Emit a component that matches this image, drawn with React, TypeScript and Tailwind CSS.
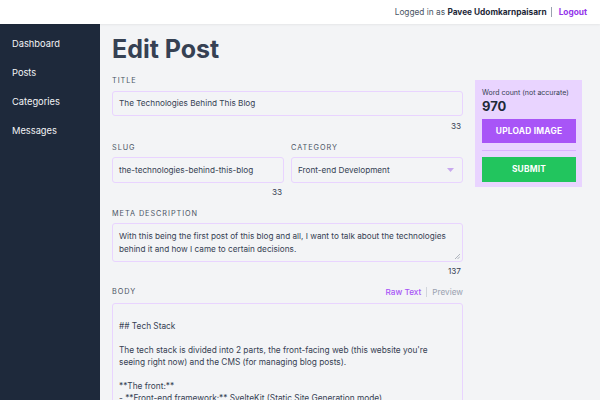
import React from "react";

export default function App() {
  const font = { fontFamily: "Inter, 'Noto Sans', sans-serif" };
  return (
    <div className="w-[600px] h-[400px] overflow-hidden flex flex-col bg-gray-100" style={font}>
      <header className="h-[24px] shrink-0 bg-white flex items-center justify-end pr-[13px] text-[8.3px] text-gray-600 shadow-[0_1px_2px_rgba(0,0,0,0.06)] z-10">
        <span>Logged in as <span className="font-bold text-gray-800">Pavee Udomkarnpaisarn</span></span>
        <span className="ml-[4px] mr-[7px] w-px h-[10px] bg-gray-400"></span>
        <span className="font-bold text-[#9333ea]">Logout</span>
      </header>
      <div className="flex flex-1 min-h-0">
        <aside className="w-[100px] shrink-0 bg-[#1e293b] pt-[13px] pl-[12px] text-[9.3px] text-gray-100">
          <div className="h-[29px] leading-[14px]">Dashboard</div>
          <div className="h-[29px] leading-[14px]">Posts</div>
          <div className="h-[29px] leading-[14px]">Categories</div>
          <div className="h-[29px] leading-[14px]">Messages</div>
        </aside>
        <main className="flex-1 pl-[12px] pt-[10px] flex items-start gap-[12px]">
          <div className="w-[351px] shrink-0">
            <h1 className="text-[25px] leading-[30px] font-bold text-gray-700">Edit Post</h1>
            <div className="mt-[11px] text-[7.3px] tracking-[0.13em] text-gray-600 leading-[12px]">TITLE</div>
            <div className="mt-[4px] h-[25px] rounded-[3px] border border-purple-200 bg-gray-100 px-[6px] flex items-center text-[8.2px] text-gray-700">The Technologies Behind This Blog</div>
            <div className="text-right text-[8.2px] text-gray-700 mt-[4px] pr-[2px] leading-[12px]">33</div>
            <div className="mt-[10px] flex gap-[7px]">
              <div className="w-[172px]">
                <div className="text-[7.3px] tracking-[0.13em] text-gray-600 leading-[12px]">SLUG</div>
                <div className="mt-[3px] h-[26px] rounded-[3px] border border-purple-200 bg-gray-100 px-[6px] flex items-center text-[8.2px] text-gray-700">the-technologies-behind-this-blog</div>
                <div className="text-right text-[8.2px] text-gray-700 mt-[3px] pr-[2px] leading-[12px]">33</div>
              </div>
              <div className="flex-1">
                <div className="text-[7.3px] tracking-[0.13em] text-gray-600 leading-[12px]">CATEGORY</div>
                <div className="mt-[3px] h-[26px] rounded-[3px] border border-purple-200 bg-gray-100 pl-[6px] pr-[8px] flex items-center justify-between text-[8.2px] text-gray-700">
                  <span>Front-end Development</span>
                  <svg width="7" height="4" viewBox="0 0 7 4"><path d="M0 0 L7 0 L3.5 4 Z" fill="#c8a8ee" /></svg>
                </div>
              </div>
            </div>
            <div className="mt-[10px] text-[7.3px] tracking-[0.13em] text-gray-600 leading-[12px]">META DESCRIPTION</div>
            <div className="relative mt-[3px] h-[39px] rounded-[3px] border border-purple-200 bg-gray-100 px-[6px] pt-[6px] text-[8.2px] leading-[12.5px] text-gray-700">
              With this being the first post of this blog and all, I want to talk about the technologies behind it and how I came to certain decisions.
              <svg width="5" height="5" viewBox="0 0 5 5" className="absolute right-[2px] bottom-[2px]"><path d="M5 0 L0 5 M5 2.5 L2.5 5" stroke="#9ca3af" strokeWidth="0.8" /></svg>
            </div>
            <div className="text-right text-[8.2px] text-gray-700 mt-[3px] pr-[2px] leading-[12px]">137</div>
            <div className="mt-[8px] flex justify-between items-center leading-[12px]">
              <div className="text-[7.3px] tracking-[0.13em] text-gray-600 pt-[1px]">BODY</div>
              <div className="flex items-center text-[8.2px]">
                <span className="text-[#a855f7] font-medium">Raw Text</span>
                <span className="ml-[5px] mr-[5px] w-px h-[10px] bg-gray-300"></span>
                <span className="text-gray-400">Preview</span>
              </div>
            </div>
            <div className="mt-[5px] h-[120px] rounded-[3px] border border-purple-200 bg-gray-100 pl-[6px] pr-[14px] pt-[16px] text-[8.3px] leading-[12px] text-gray-700">
              <div>## Tech Stack</div>
              <div className="h-[12px]"></div>
              <div>The tech stack is divided into 2 parts, the front-facing web (this website you're seeing right now) and the CMS (for managing blog posts).</div>
              <div className="h-[12px]"></div>
              <div>**The front:**</div>
              <div>- **Front-end framework:** SvelteKit (Static Site Generation mode)</div>
            </div>
          </div>
          <div className="mt-[46px] w-[107px] shrink-0 bg-purple-200 pl-[7px] pr-[6px] pt-[8px] pb-[5px]">
            <div className="text-[7px] text-gray-700 leading-[10px] whitespace-nowrap">Word count (not accurate)</div>
            <div className="text-[13px] font-bold text-gray-800 leading-[16px]">970</div>
            <div className="mt-[5px] h-[24px] bg-[#a855f7] text-white text-[8.4px] font-bold tracking-wide flex items-center justify-center">UPLOAD IMAGE</div>
            <div className="mt-[7px] h-px bg-purple-300"></div>
            <div className="mt-[6px] h-[25px] bg-[#22c55e] text-white text-[8.4px] font-bold tracking-wide flex items-center justify-center">SUBMIT</div>
          </div>
        </main>
      </div>
    </div>
  );
}
